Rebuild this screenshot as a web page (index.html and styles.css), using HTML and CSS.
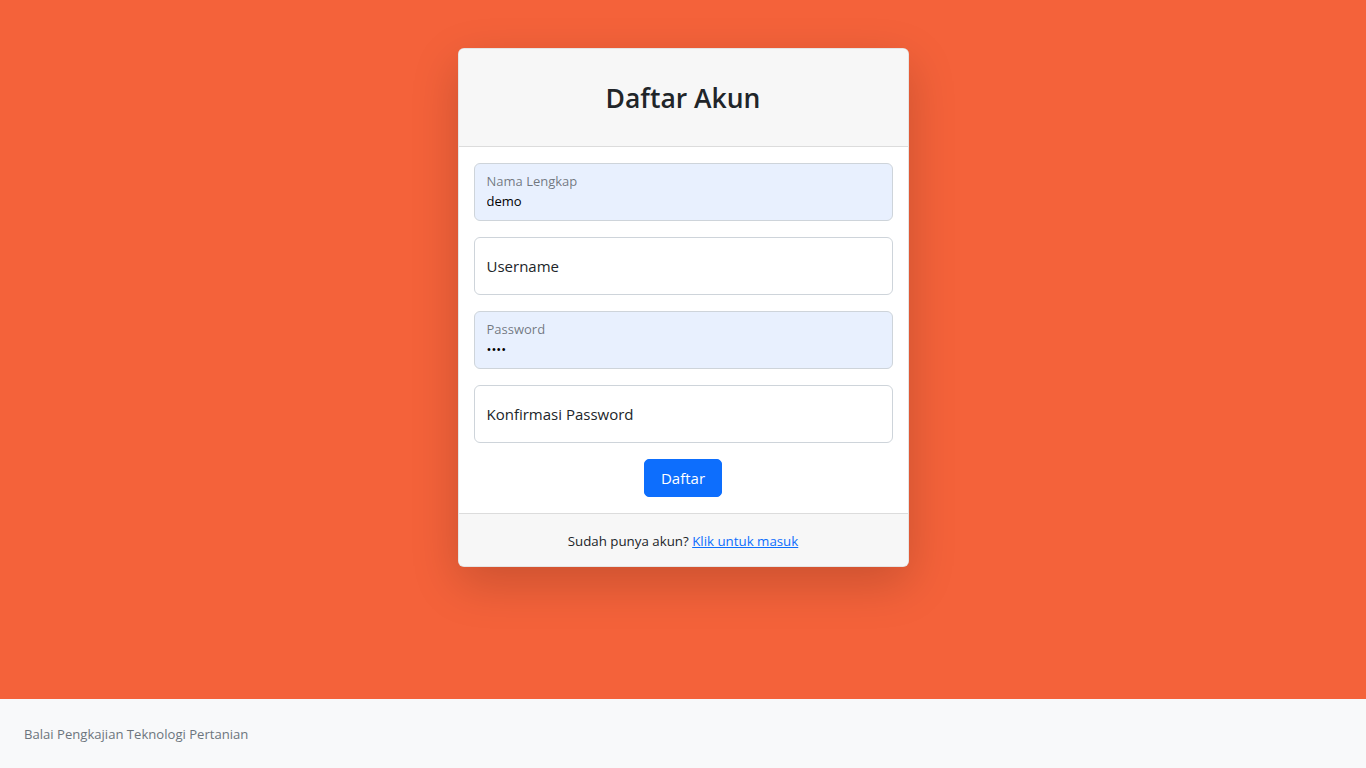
FILE: index.html
```html
<!DOCTYPE html>
<html lang="id">
<head>
<meta charset="utf-8">
<title>Daftar Akun</title>
<link rel="stylesheet" href="styles.css">
</head>
<body>
<main class="main">
  <div class="card">
    <div class="card-header">
      <h3 class="card-title">Daftar Akun</h3>
    </div>
    <form class="card-body">
      <div class="floating">
        <input class="control filled autofill" type="text" id="nama" value="demo">
        <label class="float-label up" for="nama">Nama Lengkap</label>
      </div>
      <div class="floating">
        <input class="control" type="text" id="username">
        <label class="float-label" for="username">Username</label>
      </div>
      <div class="floating">
        <input class="control filled autofill" type="password" id="password" value="demo">
        <label class="float-label up" for="password">Password</label>
      </div>
      <div class="floating">
        <input class="control" type="password" id="konfirmasi">
        <label class="float-label" for="konfirmasi">Konfirmasi Password</label>
      </div>
      <div class="actions">
        <button class="btn" type="button">Daftar</button>
      </div>
    </form>
    <div class="card-footer">
      <span>Sudah punya akun? <a href="#" class="link">Klik untuk masuk</a></span>
    </div>
  </div>
</main>
<footer class="site-footer">
  <span>Balai Pengkajian Teknologi Pertanian</span>
</footer>
</body>
</html>
```

FILE: styles.css
```css
* { box-sizing: border-box; }
html, body { margin: 0; padding: 0; }
body {
  font-family: "Open Sans", "Noto Sans", sans-serif;
  color: #212529;
  min-height: 100vh;
  display: flex;
  flex-direction: column;
  background: #f8f9fa;
}
.main {
  flex: 1;
  background: #f4623a;
  padding: 48px 0;
  display: flex;
  justify-content: center;
  align-items: flex-start;
}
.card {
  width: 451px;
  background: #fff;
  border: 1px solid rgba(0,0,0,.1);
  border-radius: 6px;
  box-shadow: 0 16px 48px rgba(0,0,0,.175);
  overflow: hidden;
}
.card-header {
  background: #f7f7f7;
  border-bottom: 1px solid #dcdcdc;
  padding: 33px 16px 31px;
  text-align: center;
}
.card-title {
  margin: 0;
  font-size: 26.5px;
  font-weight: 600;
  line-height: 33px;
  color: #212529;
}
.card-body {
  padding: 16px 15px 16px;
  display: flex;
  flex-direction: column;
  gap: 16px;
}
.floating { position: relative; }
.control {
  display: block;
  width: 100%;
  height: 58px;
  padding: 16px 12px;
  font-family: inherit;
  font-size: 15px;
  color: #212529;
  background: #fff;
  border: 1px solid #ced4da;
  border-radius: 6px;
  outline: none;
}
.control.filled { padding: 27px 12px 9px; font-size: 13px; color: #000; }
.control.autofill { background: #e8f0fe; }
.float-label {
  position: absolute;
  top: 0;
  left: 0;
  height: 100%;
  padding: 0 13px;
  display: flex;
  align-items: center;
  font-size: 15px;
  color: #212529;
  pointer-events: none;
}
.float-label.up {
  align-items: flex-start;
  padding-top: 9px;
  font-size: 13px;
  color: rgba(33,37,41,.6);
}
.actions { display: flex; justify-content: center; }
.btn {
  font-family: inherit;
  font-size: 15px;
  color: #fff;
  background: #0d6efd;
  border: 1px solid #0d6efd;
  border-radius: 5px;
  height: 38px;
  padding: 0 16px;
  cursor: pointer;
}
.card-footer {
  background: #f7f7f7;
  border-top: 1px solid #dcdcdc;
  padding: 17px 16px 14px;
  text-align: center;
  font-size: 13.3px;
  line-height: 21px;
}
.link { color: #0d6efd; }
.site-footer {
  background: #f8f9fa;
  padding: 25px 24px 23px;
  font-size: 13.1px;
  line-height: 21px;
  color: #6c757d;
}
```
